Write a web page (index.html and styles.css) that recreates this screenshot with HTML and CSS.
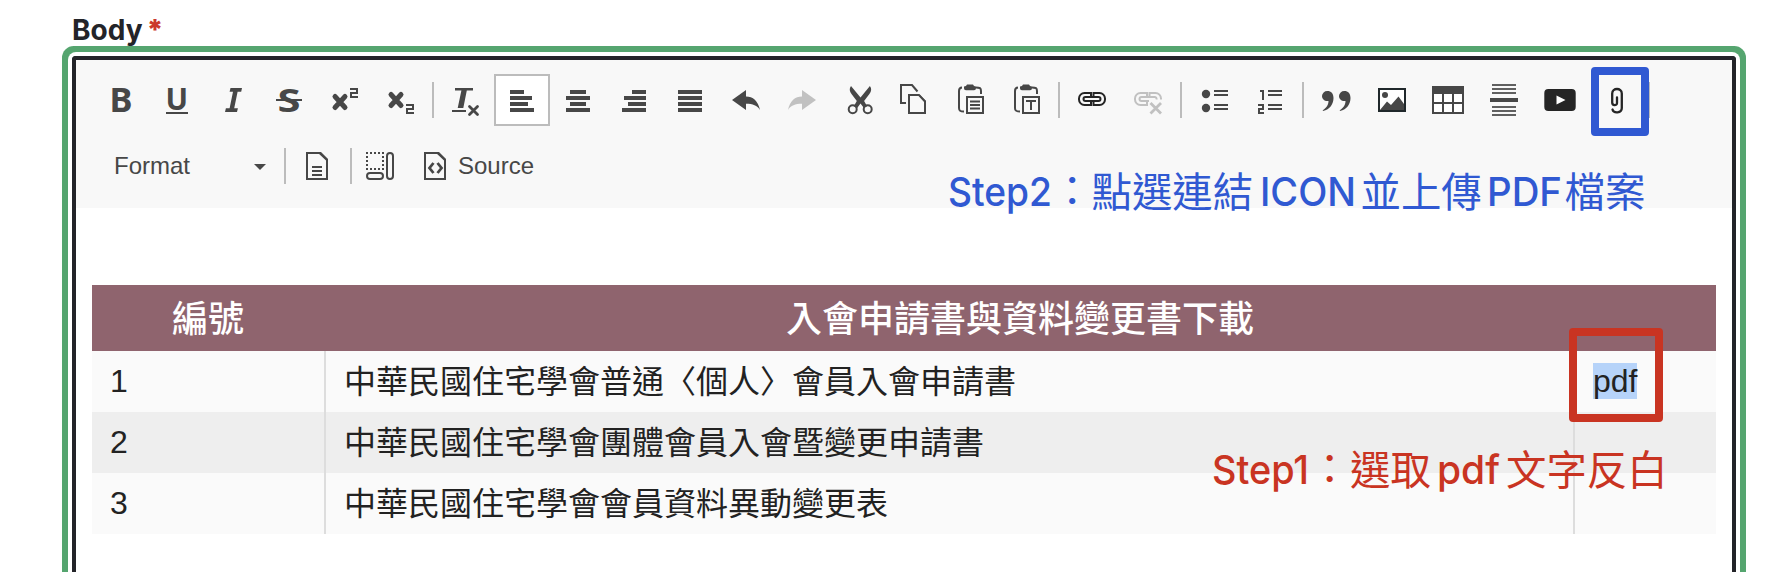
FILE: index.html
```html
<!DOCTYPE html>
<html lang="zh-Hant">
<head>
<meta charset="utf-8">
<title>Body</title>
<link rel="stylesheet" href="styles.css">
</head>
<body>
<div class="field">
  <div class="label">Body<span class="required">*</span></div>
  <div class="editor">
    <div class="toolbar">
      <div class="row">
        <span class="btn"><svg class="icon" viewBox="0 0 32 32"><text class="glyph" x="3.6" y="28" font-size="33.4" textLength="23" lengthAdjust="spacingAndGlyphs">B</text></svg></span>
        <span class="btn"><svg class="icon" viewBox="0 0 32 32"><text class="glyph" x="3.6" y="25.6" font-size="30" textLength="22.6" lengthAdjust="spacingAndGlyphs">U</text><path d="M4 28h22v2H4z"/></svg></span>
        <span class="btn"><svg class="icon" viewBox="0 0 32 32"><path d="M12.5 4H24l-.8 3.8h-3.6L16.2 24.200h3.700L19 28H7l.9-3.800h3.700L15 7.800h-3.400z"/></svg></span>
        <span class="btn"><svg class="icon" viewBox="0 0 32 32"><text class="glyph" x="3.600" y="27.700" font-size="32.500" textLength="23" lengthAdjust="spacingAndGlyphs">S</text><path d="M2 15h26v2H2z"/></svg></span>
        <span class="btn"><svg class="icon" viewBox="0 0 32 32"><path class="line w5 round" d="M5 12.500l10 11m0-11l-10 11"/><path class="line w2" d="M20 5h7v4h-6v4h7"/></svg></span>
        <span class="btn"><svg class="icon" viewBox="0 0 32 32"><path class="line w5 round" d="M5 10.500l10 11m0-11l-10 11"/><path class="line w2" d="M20 21h7v4h-6v4h7"/></svg></span>
        <span class="sep tight"></span>
        <span class="btn"><svg class="icon" viewBox="0 0 32 32"><path d="M5 4h18v2.500h-6.200L13.300 24H7.700L11.400 6.500H5zM2 26h14v2H2z"/><path class="line w3 round" d="M19.500 22.500l8 8m0-8l-8 8"/></svg></span>
        <span class="btn on"><svg class="icon" viewBox="0 0 32 32"><path d="M4 6h14v4H4zM4 12h22v4H4zM4 18h18v4H4zM4 24h24v4H4z"/></svg></span>
        <span class="btn"><svg class="icon" viewBox="0 0 32 32"><path d="M8 6h16v4H8zM4 12h24v4H4zM8 18h16v4H8zM4 24h24v4H4z"/></svg></span>
        <span class="btn"><svg class="icon" viewBox="0 0 32 32"><path d="M14 6h14v4H14zM6 12h22v4H6zM10 18h18v4H10zM4 24h24v4H4z"/></svg></span>
        <span class="btn"><svg class="icon" viewBox="0 0 32 32"><path d="M4 6h24v4H4zM4 12h24v4H4zM4 18h24v4H4zM4 24h24v4H4z"/></svg></span>
        <span class="btn"><svg class="icon" viewBox="0 0 32 32"><path d="M2 16L16 6v6.600c7 0 12 4.400 14 13.400-3-4.600-7-6.200-14-6.200V26z"/></svg></span>
        <span class="btn"><svg class="icon off" viewBox="0 0 32 32"><path d="M30 16L16 6v6.600C9 12.600 4 17 2 26c3-4.600 7-6.200 14-6.200V26z"/></svg></span>
        <span class="btn shifted"><svg class="icon" viewBox="0 0 32 32"><path d="M7 2C5 5 5.500 7 7.500 10l5.300 7-3 5.200 3.400 1.800 3.300-4.500 3.400 4.500 3.200-1.800-3-5.200 5.300-7c2-3 2.500-5 .5-8l-9.400 11.400z"/><circle class="line w2" cx="8.700" cy="25.300" r="4"/><circle class="line w2" cx="23.700" cy="25.300" r="4"/></svg></span>
        <span class="btn"><svg class="icon" viewBox="0 0 32 32"><path class="line w2" d="M6 19H1V1h11l5.500 6.500M9 11h10l6 6.500V29H9z"/><path d="M18.500 11h1.500l5.500 5.500v2z"/></svg></span>
        <span class="btn"><svg class="icon" viewBox="0 0 32 32"><path class="line w2" d="M6 3.500C3.500 3.500 3 4.500 3 7v17c0 2.500 1 3.500 5 3.500M20 3.500c4 0 5 .5 5 3.500v3M11 13h16v16H11zM14 17.500h10M14 21h10M14 24.500h10"/><path d="M8 2.500c1.500-.2 2.500-.6 3-2h6c.5 1.400 1.500 1.800 3 2V4c0 1.500-.8 2.200-2 2.200h-8C8.800 6.200 8 5.500 8 4z"/></svg></span>
        <span class="btn"><svg class="icon" viewBox="0 0 32 32"><path class="line w2" d="M6 3.500C3.500 3.500 3 4.500 3 7v17c0 2.500 1 3.500 5 3.500M20 3.500c4 0 5 .5 5 3.500v3M11 13h16v16H11zM14 17h10M19 17v9"/><path d="M8 2.500c1.500-.2 2.500-.6 3-2h6c.5 1.400 1.500 1.800 3 2V4c0 1.500-.8 2.200-2 2.200h-8C8.800 6.200 8 5.500 8 4z"/></svg></span>
        <span class="sep tight"></span>
        <span class="btn"><svg class="icon dark" viewBox="0 0 32 32"><path class="line w2" d="M15 12V9H8.500a5.500 5.500 0 0 0-5.500 5.500v1A5.500 5.500 0 0 0 8.500 21H15v-3M17.500 12V9h6a5.500 5.500 0 0 1 5.500 5.500v1a5.500 5.500 0 0 1-5.500 5.500h-6v-3"/><rect class="line w2" x="7.500" y="13" width="17" height="4" rx="2"/></svg></span>
        <span class="btn"><svg class="icon off" viewBox="0 0 32 32"><path class="line w2" d="M15 12V9H8.500a5.500 5.500 0 0 0-5.500 5.500v1A5.500 5.500 0 0 0 8.500 21H15v-3M17.500 12V9h6a5.500 5.500 0 0 1 5.500 5.500v1M17 17H9.500a2 2 0 0 1 0-4h13a2 2 0 0 1 2 2.500"/><path class="line w3" d="M18.500 19l10.500 10.500m0-10.500L18.500 29.500"/></svg></span>
        <span class="sep"></span>
        <span class="btn"><svg class="icon" viewBox="0 0 32 32"><circle cx="8" cy="10" r="4.200"/><circle cx="8" cy="24" r="4.200"/><path d="M16 6h14v2H16zM16 10h14v2H16zM16 20h14v2H16zM16 24h14v2H16z"/></svg></span>
        <span class="btn"><svg class="icon" viewBox="0 0 32 32"><path class="line w2" d="M6 7h3v9M4 21h5v4H5v4h5"/><path d="M14 6h14v2H14zM14 10h14v2H14zM14 20h14v2H14zM14 24h14v2H14z"/></svg></span>
        <span class="sep"></span>
        <span class="btn"><svg class="icon" viewBox="0 0 32 32"><path d="M2 12a5.300 5 0 0 1 5.500-5c3.500 0 6 2.500 6 7 0 6-3.500 11.500-10.500 13l-.3-.8C6 24.500 8.500 21 8.500 17 4.500 17.500 2 15 2 12zM19 12a5.300 5 0 0 1 5.500-5c3.500 0 6 2.500 6 7 0 6-3.500 11.500-10.500 13l-.3-.8c3.300-1.700 5.800-5.200 5.800-9.200-4 .5-6.500-2-6.500-5z"/></svg></span>
        <span class="btn"><svg class="icon" viewBox="0 0 32 32"><path class="paper" d="M3 5h26v22H3z"/><path class="line w2 ink" d="M3 5h26v22H3z"/><circle cx="9" cy="11" r="3"/><path d="M4 26l7-8.500 4 3.500 7.500-8.500L28 20v6z"/></svg></span>
        <span class="btn"><svg class="icon" viewBox="0 0 32 32"><path class="paper" d="M1 3h30v26H1z"/><path d="M0 2h32v8H0z"/><path class="line w2" d="M1 9v20h30V9M1 19h30M11 9v20M21 9v20"/></svg></span>
        <span class="btn"><svg class="icon" viewBox="0 0 32 32"><path class="mid" d="M4 0h24v2H4zM4 4h24v2H4zM4 8h24v2H4zM4 22h24v2H4zM4 26h24v2H4zM4 30h24v2H4z"/><path d="M2 14h28v4H2z"/></svg></span>
        <span class="btn"><svg class="icon dark" viewBox="0 0 32 32"><rect x=".3" y="5" width="31.400" height="22" rx="4"/><path class="play" d="M12.500 11.500l9 4.500-9 4.500z"/></svg></span>
        <span class="btn"><svg class="icon dark" viewBox="0 0 32 32"><path class="line round soft" d="M17 13.500V19c0 3-4.800 3-4.800-.5V9.500c0-6 9.600-6 9.600 0V24c0 5.500-8.300 5.500-9.300 1.500"/></svg></span>
        <span class="sep"></span>
      </div>
      <div class="row second">
        <span class="combo">Format<svg class="caret" viewBox="0 0 12 6"><path d="M0 0h12L6 6z"/></svg></span>
        <span class="sep flush"></span>
        <span class="btn doc"><svg class="icon" viewBox="0 0 32 32"><path class="line w2" d="M5 3h12.500L25 10v19H5zM10 17h10M10 21h10M10 25h10"/><path d="M17 2h2l7 7v3z"/></svg></span>
        <span class="sep flush"></span>
        <span class="btn blocks"><svg class="icon" viewBox="0 0 32 32"><path class="line w2 dots" d="M2 3h18M2 19h18M3 6v12M19 6v12"/><rect class="line w2" x="3" y="23" width="16" height="6" rx="3"/><rect class="line w2" x="23" y="3" width="6" height="26" rx="3"/></svg></span>
        <span class="source"><svg class="icon" viewBox="0 0 32 32"><path class="line w2" d="M5 3h12.500L25 10v19H5z"/><path d="M17 2h2l7 7v3z"/><path class="line w3" d="M13.500 13L9.500 18l4 5M17.500 13l4 5-4 5"/></svg>Source</span>
      </div>
    </div>
    <div class="content">
      <table class="files">
        <colgroup><col class="c-no"><col class="c-name"><col class="c-file"></colgroup>
        <tr><th>編號</th><th colspan="2">入會申請書與資料變更書下載</th></tr>
        <tr><td>1</td><td>中華民國住宅學會普通〈個人〉會員入會申請書</td><td><span class="selected">pdf</span></td></tr>
        <tr><td>2</td><td>中華民國住宅學會團體會員入會暨變更申請書</td><td></td></tr>
        <tr><td>3</td><td>中華民國住宅學會會員資料異動變更表</td><td></td></tr>
      </table>
    </div>
  </div>
</div>
<div class="mark mark-link"></div>
<div class="mark mark-pdf"></div>
<svg class="notes" viewBox="0 0 1780 572">
  <g class="note blue">
    <text class="latin" x="948" y="206" textLength="104" lengthAdjust="spacingAndGlyphs">Step2</text>
    <text x="1052" y="206">：</text>
    <text x="1091.500" y="206.500">點選連結</text>
    <text class="latin" x="1260" y="206" textLength="96" lengthAdjust="spacingAndGlyphs">ICON</text>
    <text x="1360.500" y="206.500">並上傳</text>
    <text class="latin" x="1487" y="206" textLength="75" lengthAdjust="spacingAndGlyphs">PDF</text>
    <text x="1564.500" y="206.500">檔案</text>
  </g>
  <g class="note red">
    <text class="latin" x="1212" y="484" textLength="97" lengthAdjust="spacingAndGlyphs">Step1</text>
    <text x="1309.500" y="484">：</text>
    <text x="1350" y="484.500">選取</text>
    <text class="latin" x="1437" y="484" textLength="63" lengthAdjust="spacingAndGlyphs">pdf</text>
    <text x="1506" y="484.500">文字反白</text>
  </g>
</svg>
</body>
</html>
```
FILE: styles.css
```css
* { box-sizing: border-box; }
body {
  margin: 0;
  height: 572px;
  overflow: hidden;
  position: relative;
  background: #fff;
  color: #232429;
  font-family: "Liberation Sans", "Noto Sans CJK TC", sans-serif;
}
.field {
  height: 572px;
  padding: 10px 44px 0 72px;
  overflow: hidden;
}
.label {
  height: 46px;
  font: 700 28px/40px Inter, sans-serif;
}
.required {
  margin-left: 4px;
  color: #cb3a2d;
  font-weight: 900;
}
.editor {
  height: 516px;
  border: 4px solid #232429;
  border-bottom: 0;
  border-radius: 4px 4px 0 0;
  box-shadow: 0 0 0 4px #fff, 0 0 0 10px #55a56f;
}
.toolbar {
  height: 148px;
  padding: 14px 0 0 18px;
  background: #f8f8f8;
}
.row {
  display: flex;
  align-items: center;
  height: 52px;
}
.second { margin-top: 14px; }
.btn {
  display: flex;
  flex: none;
  align-items: center;
  justify-content: center;
  width: 56px;
  height: 52px;
}
.btn.on {
  background: #fff;
  border: 2px solid #bcbcbc;
}
.btn.shifted { margin-left: 2px; }
.sep {
  flex: none;
  width: 2px;
  height: 36px;
  margin: 0 4px;
  background: #bcbcbc;
}
.sep.tight { margin-left: 2px; }
.sep.flush { margin: 0; }
.icon {
  display: block;
  flex: none;
  width: 32px;
  height: 32px;
  overflow: visible;
  color: #474747;
  fill: currentColor;
}
.icon.off { color: #c1c1c1; }
.icon.dark { color: #252525; }
.glyph { font-family: "Noto Sans", sans-serif; font-weight: 700; }
.line { fill: none; stroke: currentColor; }
.w2 { stroke-width: 2; }
.w3 { stroke-width: 2.8; }
.w5 { stroke-width: 5; }
.round { stroke-linecap: round; }
.dots { stroke-dasharray: 2 2; }
.ink { stroke: #20282b; }
.mid { fill: #606060; }
.paper, .play { fill: #fff; }
.soft { stroke-width: 2.3; }
.combo {
  display: flex;
  align-items: center;
  justify-content: space-between;
  width: 190px;
  padding: 0 18px 0 20px;
  color: #474747;
  font-size: 24px;
}
.caret { width: 12px; height: 6px; margin-top: 2px; fill: #474747; }
.doc { width: 64px; }
.blocks { width: 60px; padding-right: 4px; }
.source {
  display: flex;
  align-items: center;
  gap: 6px;
  padding-left: 8px;
  color: #474747;
  font-size: 24px;
}
.content { padding: 77px 16px 0; }
.files {
  width: 1624px;
  table-layout: fixed;
  border-collapse: separate;
  border-spacing: 0;
  color: #222;
  font-size: 32px;
  line-height: 37px;
}
.c-no { width: 234px; }
.c-name { width: 1249px; }
.c-file { width: 141px; }
.files th {
  height: 66px;
  padding: 2px 2px 0 0;
  background: #8f646e;
  color: #fff;
  font-size: 36px;
  font-weight: 500;
}
.files td {
  height: 61px;
  padding: 12px 18px;
  background: #fafafa;
  border-right: 2px solid #ddd;
  white-space: nowrap;
}
.files td:nth-child(2) { padding: 13px 18px 11px; }
.files td:last-child { border-right: 0; }
.files tr:nth-child(odd) td { background: #eee; }
.files tr:last-child td { background: #fafafa; }
.selected { background: #b6d3f9; }
.mark {
  position: absolute;
  border: 8px solid;
  border-radius: 4px;
}
.mark-link {
  left: 1591px;
  top: 67px;
  width: 58px;
  height: 69px;
  border-color: #3059d2;
}
.mark-pdf {
  left: 1569px;
  top: 328px;
  width: 94px;
  height: 94px;
  border-color: #c93422;
}
.notes {
  position: absolute;
  left: 0;
  top: 0;
  width: 1780px;
  height: 572px;
}
.note {
  font-family: "Noto Sans CJK TC", sans-serif;
  font-size: 40.4px;
}
.latin {
  font-family: Inter, sans-serif;
  font-size: 39.6px;
  font-weight: 500;
}
.blue { fill: #3059d2; }
.red { fill: #c93422; }
```
